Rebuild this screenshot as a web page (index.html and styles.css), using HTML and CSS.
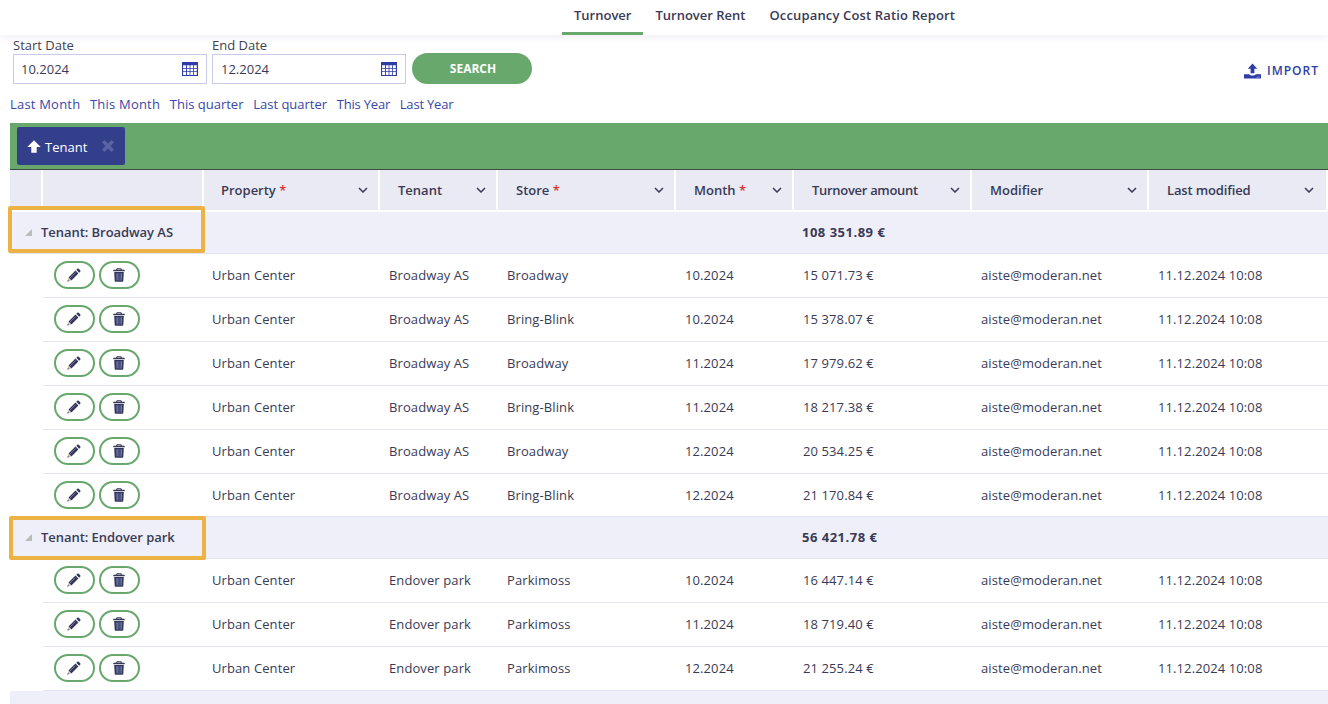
FILE: index.html
```html
<!DOCTYPE html>
<html lang="en">
<head>
  <meta charset="UTF-8" />
  <meta name="viewport" content="width=device-width, initial-scale=1.0" />
  <title>Turnover</title>
  <link rel="stylesheet" href="styles.css">
</head>
<body>
  <svg class="icon-defs" width="0" height="0">
    <symbol id="i-pencil" viewBox="0 0 14 14">
      <path d="M10.300.8a1 1 0 0 1 1.400 0l1.500 1.500a1 1 0 0 1 0 1.400l-1 1-2.900-2.900z"/>
      <path d="M8.500 2.600l2.900 2.900-7 7-2.900-2.900z"/>
      <path fill="#c9b7b0" d="M1.300 10.100l2.600 2.600-3.500.900z"/>
      <path d="M.9 12l1.100 1.100-1.600.5z"/>
      <path stroke="#8f90ad" stroke-width=".7" d="M3 10l5.500-5.500"/>
    </symbol>
    <symbol id="i-trash" viewBox="0 0 14 14">
      <path d="M4.800.3h4.400l.8 1.500h2.700v1.500H1.300V1.800H4zM5.500 1.300l-.3.500h3.600l-.3-.5z" fill-rule="evenodd"/>
      <path fill="#6b7fb5" d="M3 4.500h8v8.500H3z"/>
      <path fill-rule="evenodd" d="M2.200 4h9.600l-.5 9c0 .5-.4.800-.9.800H3.600c-.5 0-.9-.3-.9-.8zm2.100 1.300l.3 7.200h1.200V5.300zm2.300 0v7.200h.8V5.300zm1.900 0v7.200h1.200l.3-7.200z"/>
    </symbol>
    <symbol id="i-cal" viewBox="0 0 16 14">
      <path fill-rule="evenodd" d="M0 0h16v14H0zM1.100 3.300v2.600h2.900V3.300zm3.800 0v2.600h2.700V3.300zm3.500 0v2.600h2.700V3.300zm3.500 0v2.600h2.900V3.300zM1.100 6.700v2.600h2.900V6.700zm3.800 0v2.600h2.700V6.700zm3.500 0v2.600h2.700V6.700zm3.500 0v2.600h2.900V6.700zM1.100 10.100v2.800h2.900v-2.800zm3.800 0v2.800h2.700v-2.800zm3.500 0v2.800h2.700v-2.800zm3.500 0v2.800h2.900v-2.800z"/>
    </symbol>
  </svg>

  <div class="tabs">
    <a class="tab active">Turnover</a>
    <a class="tab">Turnover Rent</a>
    <a class="tab tab-long">Occupancy Cost Ratio Report</a>
  </div>

  <div class="filters">
    <div class="filter-row">
      <div class="date-field">
        <label>Start Date</label>
        <div class="date-input">
          <span>10.2024</span>
          <svg class="cal"><use href="#i-cal"/></svg>
        </div>
      </div>
      <div class="date-field">
        <label>End Date</label>
        <div class="date-input">
          <span>12.2024</span>
          <svg class="cal"><use href="#i-cal"/></svg>
        </div>
      </div>
      <button class="search-btn">SEARCH</button>
      <a class="import-link">
        <svg viewBox="0 0 18 16"><path d="M9 0l5 5.500h-3v5H7v-5H4z"/><path fill-rule="evenodd" d="M0 11.500h5.500c.5 1 1.500 1.300 3.500 1.300s3-.3 3.500-1.300H18V16H0zM13.500 14v.8h1V14zm2 0v.8h1V14z"/></svg>
        IMPORT
      </a>
    </div>
    <div class="quick-links">
      <a class="wide">Last Month</a>
      <a class="wide">This Month</a>
      <a>This quarter</a>
      <a>Last quarter</a>
      <a class="narrow">This Year</a>
      <a class="narrow">Last Year</a>
    </div>
  </div>

  <div class="grid-wrap">
    <div class="group-panel">
      <div class="group-chip">
        <svg class="arrow-up" viewBox="0 0 14 13"><path d="M7 .3l6.700 6.700H9.700v5.700H4.300V7H.3z"/></svg>
        <span>Tenant</span>
        <svg class="chip-x" viewBox="0 0 12 12"><path d="M2.500 0L6 3.500 9.500 0 12 2.500 8.500 6 12 9.500 9.500 12 6 8.500 2.500 12 0 9.500 3.500 6 0 2.500z"/></svg>
      </div>
    </div>

    <table class="grid">
      <colgroup>
        <col class="c-ind"><col class="c-act"><col class="c-prop"><col class="c-ten"><col class="c-store"><col class="c-month"><col class="c-amt"><col class="c-mod"><col class="c-last">
      </colgroup>
      <thead>
        <tr>
          <th></th>
          <th></th>
          <th class="th-prop"><div class="th-in"><span>Property <i>*</i></span><svg class="chev" viewBox="0 0 10 6"><path d="M1 1l4 4 4-4"/></svg></div></th>
          <th><div class="th-in"><span>Tenant</span><svg class="chev" viewBox="0 0 10 6"><path d="M1 1l4 4 4-4"/></svg></div></th>
          <th><div class="th-in"><span>Store <i>*</i></span><svg class="chev" viewBox="0 0 10 6"><path d="M1 1l4 4 4-4"/></svg></div></th>
          <th><div class="th-in"><span>Month <i>*</i></span><svg class="chev" viewBox="0 0 10 6"><path d="M1 1l4 4 4-4"/></svg></div></th>
          <th><div class="th-in"><span class="tight">Turnover amount</span><svg class="chev" viewBox="0 0 10 6"><path d="M1 1l4 4 4-4"/></svg></div></th>
          <th><div class="th-in"><span>Modifier</span><svg class="chev" viewBox="0 0 10 6"><path d="M1 1l4 4 4-4"/></svg></div></th>
          <th class="th-last"><div class="th-in"><span class="tight-sm">Last modified</span><svg class="chev" viewBox="0 0 10 6"><path d="M1 1l4 4 4-4"/></svg></div></th>
        </tr>
      </thead>
      <tbody>
        <tr class="group-row">
          <td colspan="3"><span class="tri"></span>Tenant: Broadway AS<span class="mark mark-one"></span></td>
          <td colspan="3"></td>
          <td colspan="3" class="group-total">108 351.89 €</td>
        </tr>
        <tr><td class="ind"></td><td class="acts"><button class="act"><svg><use href="#i-pencil"/></svg></button><button class="act"><svg><use href="#i-trash"/></svg></button></td><td class="prop">Urban Center</td><td>Broadway AS</td><td>Broadway</td><td>10.2024</td><td>15 071.73 €</td><td>aiste@moderan.net</td><td>11.12.2024 10:08</td></tr>
        <tr><td class="ind"></td><td class="acts"><button class="act"><svg><use href="#i-pencil"/></svg></button><button class="act"><svg><use href="#i-trash"/></svg></button></td><td class="prop">Urban Center</td><td>Broadway AS</td><td>Bring-Blink</td><td>10.2024</td><td>15 378.07 €</td><td>aiste@moderan.net</td><td>11.12.2024 10:08</td></tr>
        <tr><td class="ind"></td><td class="acts"><button class="act"><svg><use href="#i-pencil"/></svg></button><button class="act"><svg><use href="#i-trash"/></svg></button></td><td class="prop">Urban Center</td><td>Broadway AS</td><td>Broadway</td><td>11.2024</td><td>17 979.62 €</td><td>aiste@moderan.net</td><td>11.12.2024 10:08</td></tr>
        <tr><td class="ind"></td><td class="acts"><button class="act"><svg><use href="#i-pencil"/></svg></button><button class="act"><svg><use href="#i-trash"/></svg></button></td><td class="prop">Urban Center</td><td>Broadway AS</td><td>Bring-Blink</td><td>11.2024</td><td>18 217.38 €</td><td>aiste@moderan.net</td><td>11.12.2024 10:08</td></tr>
        <tr><td class="ind"></td><td class="acts"><button class="act"><svg><use href="#i-pencil"/></svg></button><button class="act"><svg><use href="#i-trash"/></svg></button></td><td class="prop">Urban Center</td><td>Broadway AS</td><td>Broadway</td><td>12.2024</td><td>20 534.25 €</td><td>aiste@moderan.net</td><td>11.12.2024 10:08</td></tr>
        <tr class="last-row"><td class="ind"></td><td class="acts"><button class="act"><svg><use href="#i-pencil"/></svg></button><button class="act"><svg><use href="#i-trash"/></svg></button></td><td class="prop">Urban Center</td><td>Broadway AS</td><td>Bring-Blink</td><td>12.2024</td><td>21 170.84 €</td><td>aiste@moderan.net</td><td>11.12.2024 10:08</td></tr>
        <tr class="group-row">
          <td colspan="3"><span class="tri"></span>Tenant: Endover park<span class="mark mark-two"></span></td>
          <td colspan="3"></td>
          <td colspan="3" class="group-total">56 421.78 €</td>
        </tr>
        <tr><td class="ind"></td><td class="acts"><button class="act"><svg><use href="#i-pencil"/></svg></button><button class="act"><svg><use href="#i-trash"/></svg></button></td><td class="prop">Urban Center</td><td>Endover park</td><td>Parkimoss</td><td>10.2024</td><td>16 447.14 €</td><td>aiste@moderan.net</td><td>11.12.2024 10:08</td></tr>
        <tr><td class="ind"></td><td class="acts"><button class="act"><svg><use href="#i-pencil"/></svg></button><button class="act"><svg><use href="#i-trash"/></svg></button></td><td class="prop">Urban Center</td><td>Endover park</td><td>Parkimoss</td><td>11.2024</td><td>18 719.40 €</td><td>aiste@moderan.net</td><td>11.12.2024 10:08</td></tr>
        <tr><td class="ind"></td><td class="acts"><button class="act"><svg><use href="#i-pencil"/></svg></button><button class="act"><svg><use href="#i-trash"/></svg></button></td><td class="prop">Urban Center</td><td>Endover park</td><td>Parkimoss</td><td>12.2024</td><td>21 255.24 €</td><td>aiste@moderan.net</td><td>11.12.2024 10:08</td></tr>
      </tbody>
    </table>
    <div class="grid-foot"></div>
  </div>
</body>
</html>
```

FILE: styles.css
```css
* {
  box-sizing: border-box;
}
html, body {
  height: 100%;
}
body {
  margin: 0;
  background: white;
  color: #3a3a56;
  font-family: "Open Sans", Arial, sans-serif;
  font-size: 13px;
  overflow: hidden;
}
.icon-defs {
  position: absolute;
}

/* top tabs */
.tabs {
  height: 35px;
  display: flex;
  padding-left: 562px;
  box-shadow: 0 2px 8px rgba(60,60,140,0.09);
}
.tab {
  height: 35px;
  padding: 6px 12px 0;
  font-size: 13px;
  font-weight: 600;
  color: #3a3a56;
}
.tab.active {
  border-bottom: 3px solid #68a86d;
}
.tab-long {
  letter-spacing: .15px;
}

/* filter block */
.filters {
  padding: 2px 9px 0 10px;
}
.filter-row {
  display: flex;
  align-items: flex-end;
  padding-left: 3px;
  gap: 5px;
}
.date-field label {
  display: block;
  font-size: 13px;
  line-height: 17px;
  color: #3f3f52;
}
.date-input {
  width: 194px;
  height: 30px;
  border: 1px solid #c8cae8;
  display: flex;
  align-items: center;
  justify-content: space-between;
  padding: 0 8px 0 8px;
  font-size: 13px;
}
.date-field:first-child .date-input {
  padding-left: 7px;
}
.cal {
  width: 16px;
  height: 14px;
  fill: #2f3ca8;
}
.search-btn {
  width: 120px;
  height: 31px;
  margin-left: 1px;
  margin-bottom: 0;
  padding: 0 0 0 2px;
  border: none;
  border-radius: 16px;
  background: #68a86d;
  color: white;
  font-family: inherit;
  font-size: 12px;
  font-weight: 700;
}
.import-link {
  margin-left: auto;
  margin-bottom: 5px;
  display: flex;
  align-items: center;
  gap: 6px;
  color: #2f3ca8;
  font-size: 12px;
  font-weight: 600;
  letter-spacing: 1px;
}
.import-link svg {
  width: 17px;
  height: 16px;
  fill: #2f3ca8;
}
.quick-links {
  display: flex;
  gap: 9.7px;
  margin-top: 11px;
  line-height: 18px;
}
.quick-links a {
  color: #3a46a8;
}
.quick-links .wide {
  letter-spacing: .2px;
}
.quick-links .narrow {
  letter-spacing: -.2px;
}

/* grid */
.grid-wrap {
  margin: 10px 0 0 10px;
}
.group-panel {
  height: 47px;
  background: #68a86d;
  border-bottom: 1px solid #3b4a44;
  padding: 4px 7px;
}
.group-chip {
  width: 108px;
  height: 38px;
  background: #343f8c;
  border-radius: 2px;
  color: white;
  display: flex;
  align-items: center;
  padding-left: 10px;
}
.group-chip span {
  margin-top: 2px;
}
.arrow-up {
  width: 14px;
  height: 13px;
  fill: white;
  margin-right: 4px;
}
.chip-x {
  width: 12px;
  height: 12px;
  fill: #5a63a3;
  margin-left: 15px;
}
.grid {
  width: 1318px;
  border-collapse: separate;
  border-spacing: 0;
  table-layout: fixed;
}
.c-ind { width: 33px; }
.c-act { width: 161px; }
.c-prop { width: 176px; }
.c-ten { width: 118px; }
.c-store { width: 178px; }
.c-month { width: 118px; }
.c-amt { width: 178px; }
.c-mod { width: 177px; }
.c-last { width: 179px; }
.grid th {
  height: 42px;
  background: #e9eaf3;
  border-right: 2px solid white;
  border-bottom: 2px solid white;
  padding: 0 0 1px;
  text-align: left;
  font-size: 13px;
  font-weight: 600;
}
.th-in {
  display: flex;
  align-items: center;
  justify-content: space-between;
  padding: 0 10px 0 18px;
}
.th-prop .th-in {
  padding-left: 17px;
}
.th-last .th-in {
  padding-right: 12px;
}
.grid th i {
  color: #d33;
  font-style: normal;
}
.tight {
  letter-spacing: -.3px;
}
.tight-sm {
  letter-spacing: -.15px;
}
.chev {
  width: 10px;
  height: 6px;
  fill: none;
  stroke: #3a3a56;
  stroke-width: 1.5;
}
.grid td {
  height: 44px;
  padding: 0 0 2px 9px;
  border-bottom: 1px solid #e3e4f3;
  white-space: nowrap;
  letter-spacing: .1px;
}
.grid td.ind {
  border-bottom: none;
}
.grid td.acts {
  padding-left: 11px;
}
.grid td.prop {
  padding-left: 8px;
}
.grid .last-row td {
  height: 43px;
  padding-bottom: 1px;
}
.act {
  width: 41px;
  height: 28px;
  padding: 0;
  margin-right: 4px;
  background: white;
  border: 2px solid #68a86d;
  border-radius: 14px;
  vertical-align: middle;
}
.act svg {
  display: inline-block;
  width: 14px;
  height: 14px;
  margin-left: -1px;
  fill: #35365a;
  vertical-align: middle;
}
.grid .group-row td {
  height: 42px;
  background: #eeeff8;
  font-weight: 600;
  position: relative;
  letter-spacing: -.05px;
}
.grid .group-row td:first-child {
  padding-left: 31px;
}
.grid .group-row td.group-total {
  padding-left: 8px;
  font-weight: 700;
  letter-spacing: .5px;
}
.tri {
  position: absolute;
  left: 15px;
  top: 17px;
  width: 0;
  height: 0;
  border-left: 7px solid transparent;
  border-bottom: 7px solid #bbb;
}
/* orange callouts drawn over the group rows */
.mark {
  position: absolute;
  width: 197px;
  height: 47px;
  border: 4px solid #ecb244;
  border-radius: 2px;
  pointer-events: none;
}
.mark-one {
  left: -2px;
  top: -6px;
}
.mark-two {
  left: -1px;
  top: -1px;
  height: 44px;
}
.grid-foot {
  height: 20px;
  background: #eeeff8;
}
```
